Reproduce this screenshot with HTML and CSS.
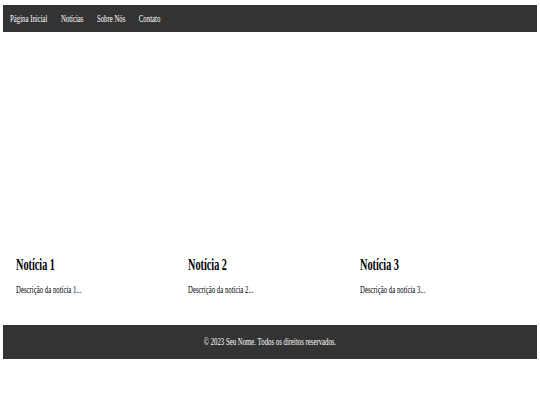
FILE: index.html
```html
<!DOCTYPE html>
<html lang="pt">
<head>
<meta charset="utf-8">
<title>Notícias</title>
<link rel="stylesheet" href="styles.css">
</head>
<body>
  <nav class="topbar">
    <ul class="menu">
      <li><a href="#">Página Inicial</a></li>
      <li><a href="#">Notícias</a></li>
      <li><a href="#">Sobre Nós</a></li>
      <li><a href="#">Contato</a></li>
    </ul>
  </nav>
  <div class="hero"></div>
  <section class="news">
    <article class="card">
      <h2 class="card-title">Notícia 1</h2>
      <p class="card-text">Descrição da notícia 1...</p>
    </article>
    <article class="card">
      <h2 class="card-title">Notícia 2</h2>
      <p class="card-text">Descrição da notícia 2...</p>
    </article>
    <article class="card">
      <h2 class="card-title">Notícia 3</h2>
      <p class="card-text">Descrição da notícia 3...</p>
    </article>
  </section>
  <footer class="footer">
    <p class="footer-text">© 2023 Seu Nome. Todos os direitos reservados.</p>
  </footer>
</body>
</html>
```
FILE: styles.css
```css
html {
  background: #ffffff;
}

body {
  margin: 0;
  padding: 4.6px 3px 0;
  background: #ffffff;
  overflow: hidden;
  font-family: "Liberation Serif", "Times New Roman", serif;
  color: #000000;
}

.topbar {
  background: #333333;
  padding: 8px 0 7.5px 7px;
}

.menu {
  display: flex;
  width: max-content;
  gap: 21px;
  margin: 0;
  padding: 0;
  list-style: none;
  transform: scaleX(0.64);
  transform-origin: 0 0;
}

.menu a {
  display: block;
  color: #ffffff;
  text-decoration: none;
  font-size: 10.6px;
  line-height: 12px;
}

.hero {
  height: 223.8px;
}

.news {
  display: flex;
  padding: 0 0 0 13px;
}

.card {
  flex: 0 0 172px;
}

.card-title {
  margin: 0;
  font-size: 16px;
  line-height: 18px;
  font-weight: bold;
  transform: scaleX(0.64);
  transform-origin: 0 0;
}

.card-text {
  margin: 10.4px 0 28.8px;
  font-size: 10.6px;
  line-height: 12px;
  transform: scaleX(0.64);
  transform-origin: 0 0;
}

.footer {
  background: #333333;
  color: #ffffff;
  text-align: center;
  padding: 11px 0;
}

.footer-text {
  margin: 0;
  font-size: 10.6px;
  line-height: 12px;
  transform: scaleX(0.64);
}
```
